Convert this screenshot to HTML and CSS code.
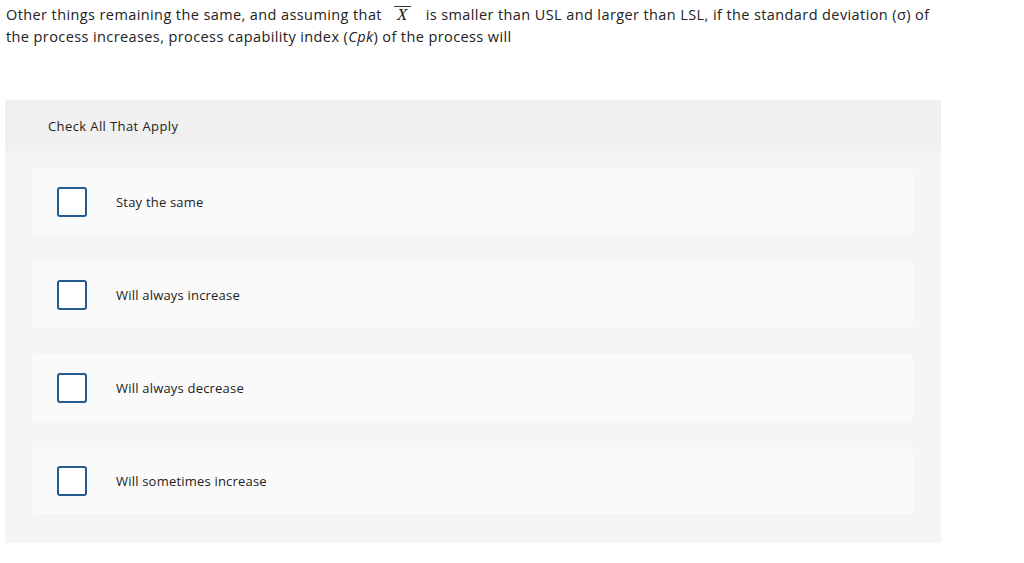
FILE: index.html
```html
<!DOCTYPE html>
<html>
<head>
<meta charset="utf-8">
<link rel="stylesheet" href="styles.css">
</head>
<body>
<div class="page">
  <p class="question"><span>Other things remaining the same, and assuming that</span> <span class="math"><span class="xbar">X</span></span> <span>is smaller than USL and larger than LSL, if the standard deviation (σ) of</span><br><span>the process increases, process capability index (<i>Cpk</i>) of the process will</span></p>
  <div class="panel">
    <div class="panel-head">Check All That Apply</div>
    <div class="options">
      <label class="option"><span class="box"></span><span class="opt-text">Stay the same</span></label>
      <label class="option"><span class="box"></span><span class="opt-text">Will always increase</span></label>
      <label class="option"><span class="box"></span><span class="opt-text">Will always decrease</span></label>
      <label class="option"><span class="box"></span><span class="opt-text">Will sometimes increase</span></label>
    </div>
  </div>
</div>
</body>
</html>
```
FILE: styles.css
```css
html, body {
  margin: 0;
  padding: 0;
  background: #ffffff;
}
body {
  font-family: "Open Sans", "Lato", sans-serif;
  color: #222222;
}
.page {
  padding: 4px 0 0 6px;
  width: 936px;
}
.question {
  margin: 0;
  font-size: 14.5px;
  letter-spacing: 0.4px;
  line-height: 22px;
  width: 930px;
  white-space: nowrap;
}
.math {
  display: inline-block;
  padding: 0 10px 0 8px;
  letter-spacing: 0;
}
.xbar {
  font-family: "Liberation Serif", "DejaVu Serif", serif;
  font-style: italic;
  font-size: 17px;
  border-top: 1.5px solid #333;
  padding: 0 4px 0 3px;
  line-height: 16px;
  display: inline-block;
}
.question i {
  font-style: italic;
}
.panel {
  margin-top: 52px;
  margin-left: -1px;
  width: 936px;
  background: #f5f5f5;
  border-radius: 2px;
  padding-bottom: 29px;
}
.panel-head {
  background: #f0f0f0;
  height: 51px;
  display: flex;
  align-items: center;
  padding-left: 43px;
  font-size: 13px;
  letter-spacing: 0.4px;
  color: #222;
}
.options {
  display: flex;
  flex-direction: column;
  gap: 26px;
  padding: 17px 28px 0 27px;
}
.option {
  display: flex;
  align-items: center;
  height: 67px;
  background: #fafafa;
  border-radius: 4px;
  padding-left: 25px;
}
.box {
  width: 26px;
  height: 26px;
  border: 2px solid #255b8f;
  border-radius: 3px;
  background: #fff;
  flex: none;
}
.opt-text {
  margin-left: 29px;
  font-size: 13px;
  letter-spacing: 0.2px;
  color: #222;
}
```
